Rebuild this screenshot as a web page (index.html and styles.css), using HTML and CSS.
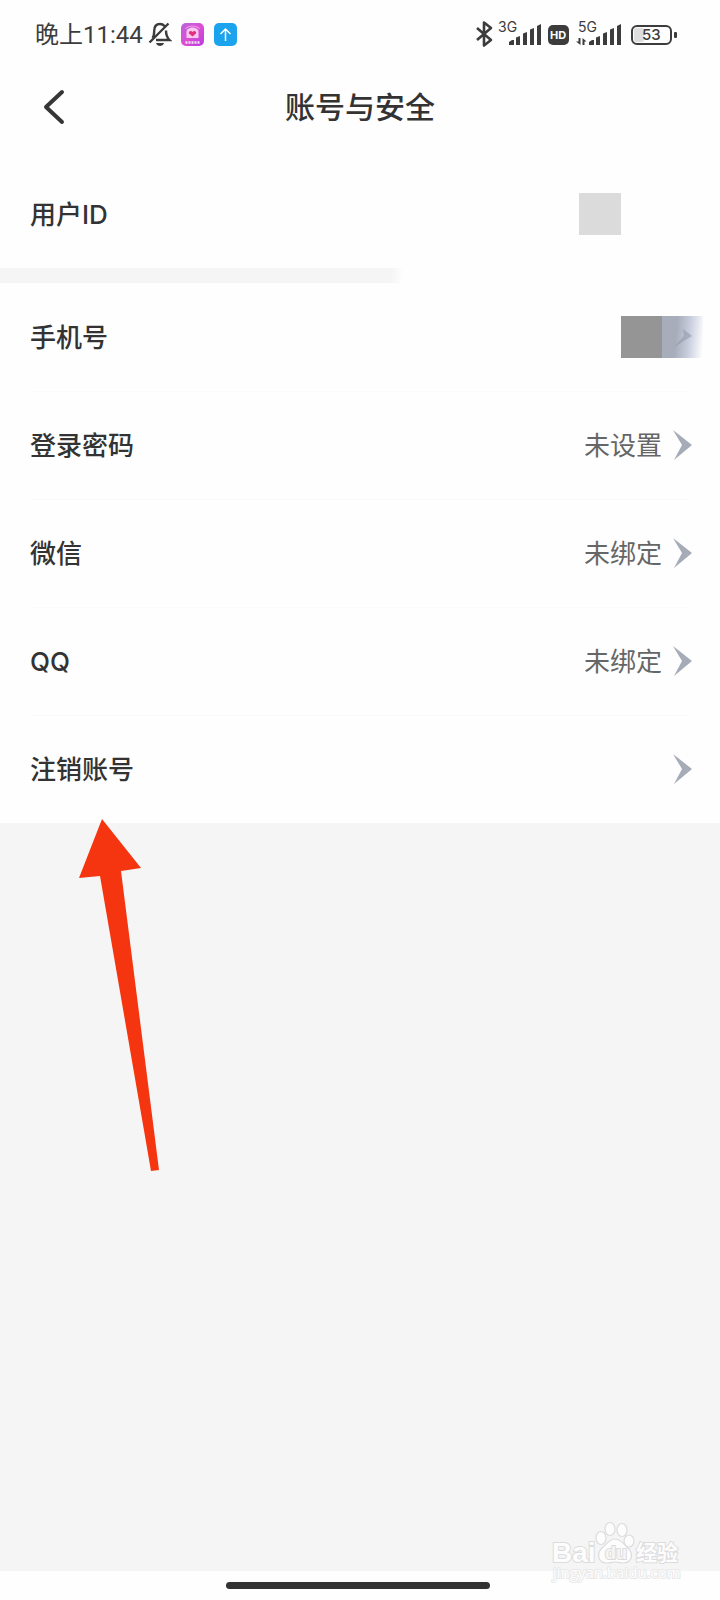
FILE: index.html
```html
<!DOCTYPE html>
<html lang="zh-CN">
<head>
<meta charset="utf-8">
<meta name="viewport" content="width=device-width, initial-scale=1">
<title>账号与安全</title>
<link rel="stylesheet" href="styles.css">
</head>
<body>
<div class="screen">
  <div class="status">
    <div class="status-left">
      <span class="clock">晚上11:44</span>
      <svg class="bell" width="24" height="26" viewBox="0 0 24 26" fill="none" stroke="#3c3c3c" stroke-width="2.4">
        <path d="M4.500 17c1.700-2 1.700-4 1.700-7C6.200 5.500 8.500 3 12 3c2 0 3.500.8 4.500 2M18 9.500c0 4.500.4 6.500 3.500 9.500H8M1.500 21.500L20.500 2.500"/>
        <path d="M8 22h8c-.8 2.200-2.200 3-4 3s-3.200-.8-4-3z" fill="#3c3c3c" stroke="none"/>
      </svg>
      <svg class="app" width="23" height="23" viewBox="0 0 23 23">
        <defs><linearGradient id="pink" x1="0" y1="0" x2="1" y2="1"><stop offset="0" stop-color="#b765dc"/><stop offset=".5" stop-color="#dc4fd2"/><stop offset="1" stop-color="#b93be0"/></linearGradient></defs>
        <rect width="23" height="23" rx="5" fill="url(#pink)"/>
        <path d="M5.500 9c0-6 12-6 12 0v6h-12z" fill="#f8c9ef"/>
        <path d="M4.500 6c3-4 11-4 14 0" fill="none" stroke="#ee9be8" stroke-width="1.200"/>
        <path d="M11.500 13.500L8 10.500c-1-2 2-3.500 3.500-1.500C13 7 16 8.500 15 10.500z" fill="#e3307f"/>
        <path d="M4.500 19.500h14" stroke="#fff" stroke-width="2.500" stroke-dasharray="2 1" opacity=".85"/>
      </svg>
      <svg class="app" width="23" height="23" viewBox="0 0 23 23">
        <rect width="23" height="23" rx="5" fill="#1ba3ee"/>
        <path d="M11.500 18V6M6.500 11l5-5 5 5" fill="none" stroke="#fff" stroke-width="1.500"/>
      </svg>
    </div>
    <svg class="signals" width="202" height="34" viewBox="0 -3 202 34" fill="#3c3c3c">
      <path d="M2 8l14 12-7 5.500V2.500L16 8 2 20" fill="none" stroke="#3c3c3c" stroke-width="2.600" stroke-linejoin="round"/>
      <text class="net" x="23" y="12">3G</text>
      <path d="M34 25v-3l3-2h2v5zM41 17.500l4-1.500v9h-4zM48 13.500l4-1.500v13h-4zM55 9.500L59 8v17h-4zM62 6l4-2v21h-4z"/>
      <rect x="73" y="5" width="21" height="20" rx="5"/>
      <text class="hd" x="75" y="19">HD</text>
      <text class="net" x="103" y="12">5G</text>
      <path d="M105.500 18v7L101 21.500h2.500V18zM107.500 25v-7l4 3.500h-2V25z"/>
      <path d="M114 25v-3l3-2h2v5zM121 17.500l4-1.500v9h-4zM128 13.500l4-1.500v13h-4zM135 9.500l4-1.500v17h-4zM142 6l4-2v21h-4z"/>
      <rect x="159" y="8" width="10" height="14" rx="2" fill="#dedede"/>
      <rect x="157" y="6" width="39" height="18" rx="5" fill="none" stroke="#3c3c3c" stroke-width="2"/>
      <text class="level" x="167" y="20">53</text>
      <rect x="199" y="12" width="3" height="6" rx="1"/>
    </svg>
  </div>

  <header class="header">
    <button class="back" type="button" aria-label="返回">
      <svg width="22" height="36" viewBox="0 0 22 36" fill="none" stroke="#363636" stroke-width="4" stroke-linecap="round" stroke-linejoin="round"><path d="M19 3L3 18l16 15"/></svg>
    </button>
    <h1 class="title">账号与安全</h1>
  </header>

  <main class="main">
    <div class="row row-id"><span class="label">用户ID</span><span class="mask"></span></div>
    <div class="divider"></div>
    <button class="row row-phone" type="button">
      <span class="label">手机号</span>
      <span class="mask mask-dark"></span>
      <span class="mask mask-fade"><svg width="19" height="22" viewBox="0 0 19 22"><path d="M10 3l9 7L1 21l10-11z" fill="#9298ac" opacity=".6"/></svg></span>
    </button>
    <button class="row line" type="button"><span class="label">登录密码</span><span class="value">未设置</span><svg class="chev" width="19" height="30" viewBox="0 0 19 30"><path d="M0 0l19 15L1 30l8-15z"/></svg></button>
    <button class="row line" type="button"><span class="label">微信</span><span class="value">未绑定</span><svg class="chev" width="19" height="30" viewBox="0 0 19 30"><path d="M0 0l19 15L1 30l8-15z"/></svg></button>
    <button class="row line" type="button"><span class="label">QQ</span><span class="value">未绑定</span><svg class="chev" width="19" height="30" viewBox="0 0 19 30"><path d="M0 0l19 15L1 30l8-15z"/></svg></button>
    <button class="row line" type="button"><span class="label">注销账号</span><svg class="chev" width="19" height="30" viewBox="0 0 19 30"><path d="M0 0l19 15L1 30l8-15z"/></svg></button>
    <svg class="pointer" width="64" height="354" viewBox="0 0 64 354"><path d="M23 1l39 49-20 3 38 299-8 1-51-295-21 2z" fill="#f5350f"/></svg>
  </main>

  <div class="rest"></div>
  <footer class="nav"><div class="home"></div></footer>

  <svg class="watermark" width="132" height="66" viewBox="0 0 132 66">
    <g fill="#fdfdfd" stroke="#dcdcdc" stroke-width="1.200">
      <ellipse cx="51" cy="18" rx="5" ry="6.500"/>
      <ellipse cx="60" cy="9" rx="5" ry="6.500"/>
      <ellipse cx="72" cy="10" rx="5" ry="6.500"/>
      <ellipse cx="79" cy="21" rx="5" ry="6"/>
      <path d="M65 19c6 0 8 5 13 9 6 6 4 15-5 15-4 0-5-1-8-1s-4 1-8 1c-9 0-11-9-5-15 5-4 7-9 13-9z"/>
    </g>
    <text class="wm wm-bai" x="2" y="42">Bai</text>
    <text class="wm wm-du" x="55" y="39">du</text>
    <text class="wm wm-cn" x="86" y="40">经验</text>
    <text class="wm wm-url" x="3" y="58">jingyan.baidu.com</text>
  </svg>
</div>
</body>
</html>
```

FILE: styles.css
```css
* { box-sizing: border-box; }
body {
  margin: 0;
  background: #fefefe;
  color: #333;
  font-family: Inter, "Noto Sans CJK SC", sans-serif;
}
svg { display: block; flex: none; }
button {
  border: 0;
  margin: 0;
  background: none;
  color: inherit;
  font: inherit;
  text-align: left;
  cursor: pointer;
}
.screen {
  position: relative;
  display: flex;
  flex-direction: column;
  min-height: 100vh;
}
.status {
  display: flex;
  align-items: center;
  justify-content: space-between;
  height: 54px;
  padding: 14px 43px 0 35px;
}
.status-left {
  display: flex;
  align-items: center;
}
.clock {
  padding-top: 2px;
  font-family: Roboto, "Noto Sans CJK SC", sans-serif;
  font-size: 24px;
  font-weight: 400;
  line-height: 32px;
  color: #3c3c3c;
}
.bell { margin-left: 5px; }
.app { margin-left: 9px; }
.app + .app { margin-left: 10px; }
.net { font: 400 14px Inter, sans-serif; }
.hd { font: 700 11px Inter, sans-serif; fill: #fff; }
.level { font: 500 15px Inter, sans-serif; }
.header {
  display: grid;
  grid-template-columns: 1fr auto 1fr;
  align-items: center;
  height: 106px;
  padding: 0 31px;
}
.back {
  justify-self: start;
  padding: 12px;
}
.title {
  margin: 0;
  font-size: 30px;
  font-weight: 500;
  line-height: 40px;
}
.main { position: relative; }
.row {
  display: flex;
  align-items: center;
  width: 100%;
  height: 108px;
  padding: 0 28px 0 30px;
  font-size: 26px;
  line-height: 36px;
}
.row-id { padding-right: 99px; }
.row-phone { padding-right: 17px; }
.label {
  flex: 1;
  padding-top: 2px;
  font-weight: 500;
}
.value {
  padding-top: 2px;
  margin-right: 11px;
  color: #666;
}
.chev { fill: #a6abb8; }
.line {
  background: linear-gradient(#fafafa, #fafafa) center top / calc(100% - 60px) 1px no-repeat;
}
.divider {
  width: 56%;
  height: 15px;
  background: linear-gradient(to right, #f5f5f5 97%, #fefefe);
}
.mask {
  width: 42px;
  height: 42px;
  background: #dbdbdb;
}
.mask-dark { width: 41px; background: #959595; }
.mask-fade {
  display: flex;
  align-items: center;
  width: 41px;
  padding-left: 11px;
  background: linear-gradient(95deg, #a8adbb 35%, #c9cede 65%, #fefefe 98%);
}
.pointer {
  position: absolute;
  left: 79px;
  top: 658px;
  overflow: visible;
}
.rest {
  flex: 1;
  background: #f5f5f5;
}
.nav {
  display: flex;
  justify-content: center;
  height: 29px;
  padding: 11px 4px 0 0;
}
.home {
  width: 37%;
  height: 7px;
  border-radius: 4px;
  background: #333;
}
.watermark {
  position: absolute;
  right: 38px;
  bottom: 14px;
}
.wm {
  fill: #fdfdfd;
  stroke: #dcdcdc;
  stroke-width: 2px;
  paint-order: stroke;
}
.wm-bai { font: 700 28px "Liberation Sans", sans-serif; }
.wm-du { font: 700 18px "Liberation Sans", sans-serif; fill: #f5f5f5; }
.wm-cn { font: 700 21px "Noto Sans CJK SC", sans-serif; }
.wm-url { font: 400 15px "Open Sans", sans-serif; stroke: #e9e9e9; }
```
